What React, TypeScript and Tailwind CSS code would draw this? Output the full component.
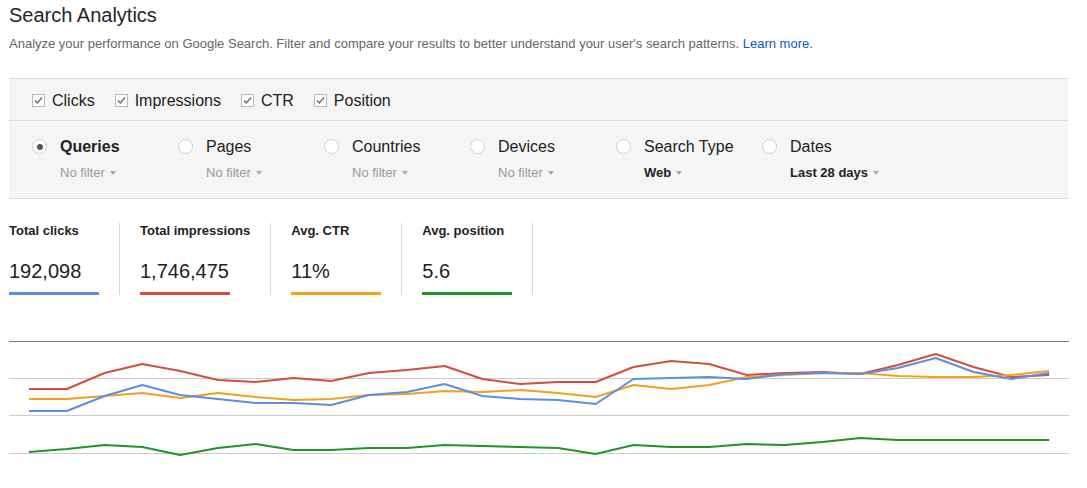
import React from "react";

const FONT = { fontFamily: '"Liberation Sans", Arial, sans-serif' };

const metricsToggles = ["Clicks", "Impressions", "CTR", "Position"];

const dimensions = [
  { label: "Queries", sub: "No filter", selected: true, subBold: false },
  { label: "Pages", sub: "No filter", selected: false, subBold: false },
  { label: "Countries", sub: "No filter", selected: false, subBold: false },
  { label: "Devices", sub: "No filter", selected: false, subBold: false },
  { label: "Search Type", sub: "Web", selected: false, subBold: true },
  { label: "Dates", sub: "Last 28 days", selected: false, subBold: true },
];

const totals = [
  { label: "Total clicks", value: "192,098", bar: "bg-[#5a8fe3]" },
  { label: "Total impressions", value: "1,746,475", bar: "bg-[#d44d3d]" },
  { label: "Avg. CTR", value: "11%", bar: "bg-[#f4a11a]" },
  { label: "Avg. position", value: "5.6", bar: "bg-[#1f9626]" },
];

// y values in page coordinates, one per day (28 days)
const series = [
  {
    color: "#d44d3d",
    ys: [388, 388, 372, 363, 370, 379, 381, 377, 380, 372, 369, 365, 378, 383, 381, 381, 366, 360, 363, 374, 372, 371, 373, 364, 353, 366, 376, 374],
  },
  {
    color: "#f4a11a",
    ys: [398, 398, 395, 392, 397, 392, 396, 399, 398, 394, 393, 390, 391, 389, 392, 396, 384, 388, 384, 376, 374, 372, 372, 375, 376, 376, 374, 370],
  },
  {
    color: "#5a8fe3",
    ys: [410, 410, 395, 384, 394, 398, 402, 402, 404, 394, 391, 383, 395, 398, 399, 403, 378, 377, 376, 378, 373, 372, 373, 367, 357, 371, 378, 372],
  },
  {
    color: "#1f9626",
    ys: [451, 448, 444, 446, 454, 447, 443, 449, 449, 447, 447, 444, 445, 446, 447, 453, 444, 446, 446, 443, 444, 441, 437, 439, 439, 439, 439, 439],
  },
];

function Caret() {
  return (
    <span className="ml-[5px] inline-block h-0 w-0 border-x-[3.5px] border-t-[4px] border-x-transparent border-t-[#aaa] align-middle" />
  );
}

function CheckBox() {
  return (
    <svg width="13" height="13" viewBox="0 0 13 13" className="shrink-0">
      <rect x="0.5" y="0.5" width="12" height="12" fill="#fff" stroke="#b9b9b9" />
      <path d="M3 6.5 L5.3 9 L10 3.5" fill="none" stroke="#6b6b6b" strokeWidth="1.4" />
    </svg>
  );
}

function Radio({ selected }: { selected: boolean }) {
  return (
    <span className="flex h-[15px] w-[15px] shrink-0 items-center justify-center rounded-full border border-[#d0d0d0] bg-white">
      {selected && <span className="h-[6px] w-[6px] rounded-full bg-[#555]" />}
    </span>
  );
}

function Chart() {
  const ox = 9;
  const oy = 330;
  const px = (i: number) => 29 + i * 37.78 - ox;
  return (
    <svg width="1062" height="134" viewBox="0 0 1062 134" className="block">
      <line x1="0" x2="1060" y1={340.5 - oy} y2={340.5 - oy} stroke="#7a7a7a" strokeWidth="1" />
      {[377.5, 414.5, 452.5].map((y) => (
        <line key={y} x1="0" x2="1060" y1={y - oy} y2={y - oy} stroke="#cccccc" strokeWidth="1" />
      ))}
      {series.map((s) => (
        <polyline
          key={s.color}
          fill="none"
          stroke={s.color}
          strokeWidth="2"
          strokeLinejoin="round"
          points={s.ys.map((y, i) => `${px(i).toFixed(1)},${y - oy}`).join(" ")}
        />
      ))}
    </svg>
  );
}

export default function App() {
  return (
    <div className="h-[488px] w-[1087px] overflow-hidden bg-white text-[#222]" style={FONT}>
      <div className="px-[9px] pt-[3px]">
        <h1 className="text-[20px] leading-[24px] font-normal text-[#262626]">Search Analytics</h1>
        <p className="mt-[9px] text-[13px] leading-[16px] text-[#666]">
          Analyze your performance on Google Search. Filter and compare your results to better understand your user's
          search patterns. <a className="text-[#1155cc]">Learn more.</a>
        </p>
      </div>

      {/* Filter panel */}
      <div className="mx-[9px] mt-[26px] w-[1059px] border-y border-[#dcdcdc] bg-[#f5f5f5]">
        <div className="flex h-[42px] items-center gap-[20px] border-b border-[#dcdcdc] pl-[23px] pt-[2px]">
          {metricsToggles.map((m) => (
            <label key={m} className="flex items-center gap-[7px] text-[16px] leading-[20px]">
              <CheckBox />
              {m}
            </label>
          ))}
        </div>
        <div className="flex h-[77px] pl-[23px] pt-[16px]">
          {dimensions.map((d) => (
            <div key={d.label} className="flex w-[146px] items-start gap-[13px]">
              <div className="pt-[2px]">
                <Radio selected={d.selected} />
              </div>
              <div>
                <div className={`text-[16px] leading-[20px] ${d.selected ? "font-bold" : ""}`}>{d.label}</div>
                <div
                  className={`mt-[8px] flex items-center text-[13px] leading-[16px] ${
                    d.subBold ? "font-bold text-[#222]" : "text-[#999]"
                  }`}
                >
                  {d.sub}
                  <Caret />
                </div>
              </div>
            </div>
          ))}
        </div>
      </div>

      {/* Totals */}
      <div className="mt-[24px] flex px-[9px]">
        {totals.map((t, i) => (
          <div
            key={t.label}
            className={`min-w-[110px] border-r border-[#d6d6d6] pr-[20px] ${i > 0 ? "pl-[20px]" : ""}`}
          >
            <div className="text-[13px] leading-[16px] font-bold whitespace-nowrap">{t.label}</div>
            <div className="mt-[20px] text-[20px] leading-[24px]">{t.value}</div>
            <div className={`mt-[9px] h-[3px] w-[90px] ${t.bar}`} />
          </div>
        ))}
      </div>

      {/* Chart */}
      <div className="mt-[36px] px-[9px]">
        <Chart />
      </div>
    </div>
  );
}
